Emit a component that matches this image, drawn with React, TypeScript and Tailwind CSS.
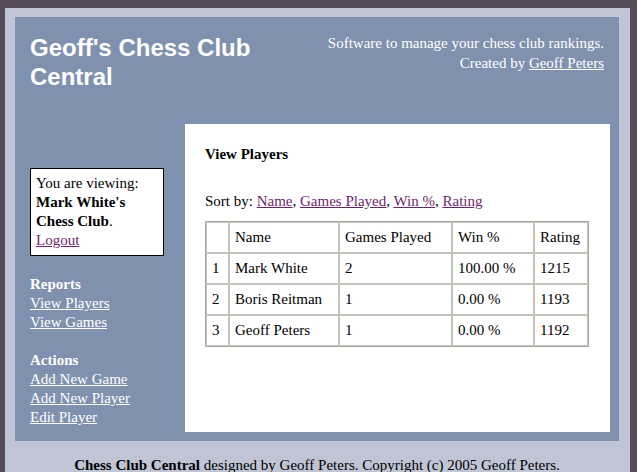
export default function App() {
  const rows = [
    { n: "1", name: "Mark White", games: "2", win: "100.00 %", rating: "1215" },
    { n: "2", name: "Boris Reitman", games: "1", win: "0.00 %", rating: "1193" },
    { n: "3", name: "Geoff Peters", games: "1", win: "0.00 %", rating: "1192" },
  ];
  return (
    <div className="min-h-screen bg-[#574b5a] pt-[8px] pl-[5px] font-['Liberation_Serif','Times_New_Roman',serif] text-[15px] leading-[19px] text-black">
      <div className="w-[625px] bg-[#bfc5d4] pt-[9px] pl-[10px] pr-[11px] pb-[30px]">
        <div className="flex flex-col bg-[#7f91ae]">
          <div className="flex h-[107px] justify-between px-[15px] pt-[16px]">
            <h1 className="w-[260px] font-['Liberation_Sans',Arial,sans-serif] text-[24px] font-bold leading-[29px] text-white">
              Geoff's Chess Club Central
            </h1>
            <div className="text-right leading-[20px] text-white">
              Software to manage your chess club rankings.
              <br />
              Created by <a href="#" className="text-white underline">Geoff Peters</a>
            </div>
          </div>
          <div className="flex pr-[9px] pb-[9px]">
            <div className="w-[170px] shrink-0 pl-[15px] pt-[44px] pb-[5px] text-white">
              <div className="w-[134px] border border-black bg-white p-[5px] text-black">
                You are viewing:
                <br />
                <b>Mark White's Chess Club</b>.
                <br />
                <a href="#" className="text-[#6e1f6e] underline">Logout</a>
              </div>
              <div className="mt-[19px]">
                <div className="font-bold">Reports</div>
                <a href="#" className="block w-fit text-white underline">View Players</a>
                <a href="#" className="block w-fit text-white underline">View Games</a>
                <div className="h-[19px]"></div>
                <div className="font-bold">Actions</div>
                <a href="#" className="block w-fit text-white underline">Add New Game</a>
                <a href="#" className="block w-fit text-white underline">Add New Player</a>
                <a href="#" className="block w-fit text-white underline">Edit Player</a>
              </div>
            </div>
            <div className="min-h-[308px] flex-1 bg-white pt-[21px] pl-[20px] pr-[21px]">
              <div className="font-bold">View Players</div>
              <div className="mt-[28px]">
                Sort by: <a href="#" className="text-[#6e1f6e] underline">Name</a>,{" "}
                <a href="#" className="text-[#6e1f6e] underline">Games Played</a>,{" "}
                <a href="#" className="text-[#6e1f6e] underline">Win %</a>,{" "}
                <a href="#" className="text-[#6e1f6e] underline">Rating</a>
              </div>
              <table className="mt-[10px] w-[384px] table-fixed border-separate border-spacing-0 border border-[#a9a8a0]">
                <tbody>
                  <tr>
                    <td className="h-[31px] w-[23px] border border-[#c4c3bc] px-[5px] align-middle"></td>
                    <td className="h-[31px] w-[110px] border border-[#c4c3bc] px-[5px] align-middle">Name</td>
                    <td className="h-[31px] w-[113px] border border-[#c4c3bc] px-[5px] align-middle">Games Played</td>
                    <td className="h-[31px] w-[82px] border border-[#c4c3bc] px-[5px] align-middle">Win %</td>
                    <td className="h-[31px] w-[54px] border border-[#c4c3bc] px-[5px] align-middle">Rating</td>
                  </tr>
                  {rows.map((r) => (
                    <tr key={r.n}>
                      <td className="h-[31px] border border-[#c4c3bc] px-[5px] align-middle">{r.n}</td>
                      <td className="h-[31px] border border-[#c4c3bc] px-[5px] align-middle">{r.name}</td>
                      <td className="h-[31px] border border-[#c4c3bc] px-[5px] align-middle">{r.games}</td>
                      <td className="h-[31px] border border-[#c4c3bc] px-[5px] align-middle">{r.win}</td>
                      <td className="h-[31px] border border-[#c4c3bc] px-[5px] align-middle">{r.rating}</td>
                    </tr>
                  ))}
                </tbody>
              </table>
            </div>
          </div>
        </div>
        <div className="pt-[15px] text-center">
          <b>Chess Club Central</b> designed by Geoff Peters. Copyright (c) 2005 Geoff Peters.
        </div>
      </div>
    </div>
  );
}
